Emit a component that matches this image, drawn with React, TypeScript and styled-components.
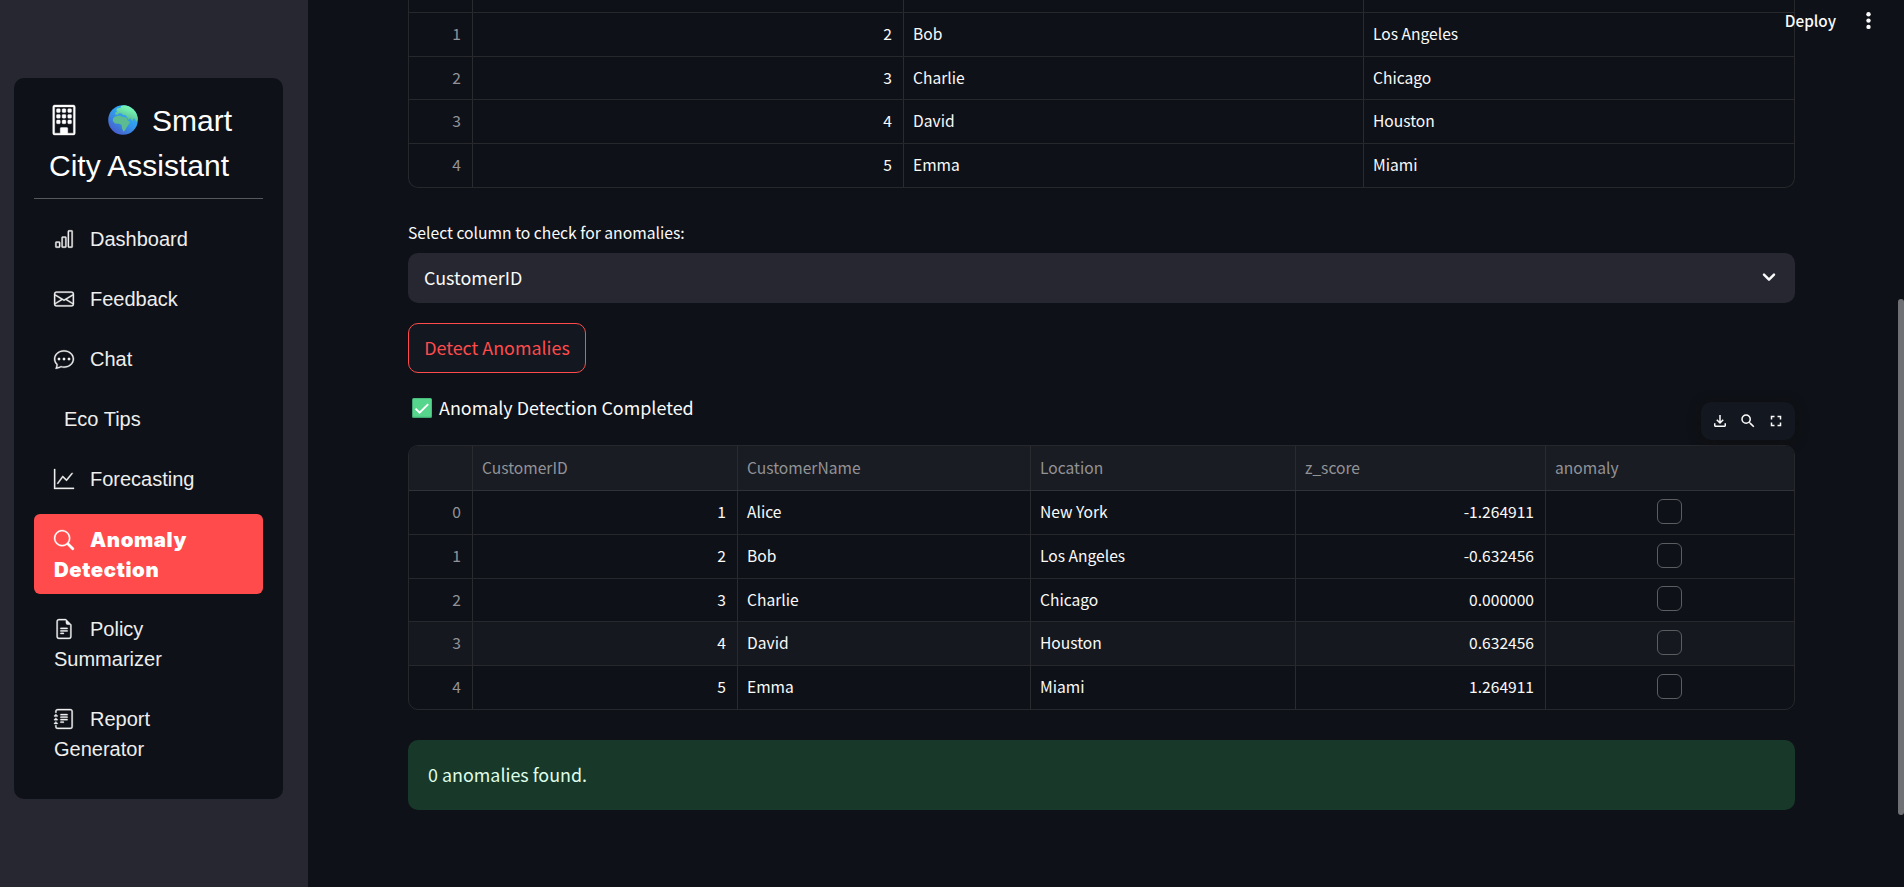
import React from "react";
import styled, { createGlobalStyle, css } from "styled-components";
import {
  BsBarChart,
  BsBuilding,
  BsChatDots,
  BsEnvelope,
  BsFileEarmarkText,
  BsGraphUp,
  BsJournalText,
  BsSearch,
} from "react-icons/bs";
import { MdFullscreen, MdOutlineFileDownload, MdSearch } from "react-icons/md";
import type { IconType } from "react-icons";

const GlobalStyle = createGlobalStyle`
  *, *::before, *::after { box-sizing: border-box; }
  html, body { margin: 0; padding: 0; background: #0e1117; }
  body {
    overflow: hidden;
    color: #fafafa;
    font-family: "Noto Sans CJK SC", "Noto Sans", sans-serif;
  }
`;

const Page = styled.div`
  position: relative;
  display: flex;
  width: 100%;
  height: 887px;
  overflow: hidden;
  background: #0e1117;
`;

/* ---------- sidebar ---------- */

const Sidebar = styled.aside`
  flex: 0 0 308px;
  height: 100%;
  padding: 78px 25px 0 14px;
  background: #262730;
`;

const MenuPanel = styled.nav`
  height: 721px;
  padding: 20px;
  border-radius: 10px;
  background: #0e1117;
  font-family: "Liberation Sans", Arial, sans-serif;
`;

const MenuTitle = styled.h1`
  margin: 0 0 15px;
  padding: 0 0 10px 15px;
  border-bottom: 1px solid #56585c;
  font-size: 30px;
  font-weight: 400;
  line-height: 45px;
  color: #fff;
`;

const TitleLine = styled.span`
  display: flex;
  align-items: center;
  height: 45px;
  white-space: nowrap;

  > svg {
    margin-bottom: 1px;
  }
  > svg:first-child {
    margin-right: 29px;
    stroke: currentColor;
    stroke-width: 0.2px;
    overflow: visible;
  }
  > svg + svg {
    margin-right: 14px;
  }
`;

const MenuList = styled.ul`
  display: flex;
  flex-direction: column;
  gap: 10px;
  margin: 0;
  padding: 0;
  list-style: none;
`;

const MenuItem = styled.li<{ $active?: boolean }>`
  padding: 10px 20px;
  border-radius: 6px;
  font-size: 20px;
  line-height: 30px;
  color: #eee;
  ${(p) =>
    p.$active &&
    css`
      padding-top: 11px;
      padding-bottom: 9px;
      background: #ff4b4b;
      color: #fff;
      font-family: Inter, "Liberation Sans", sans-serif;
      font-size: 20.4px;
      font-weight: 900;
      letter-spacing: 0.6px;
    `}
`;

const MenuLine = styled.span<{ $indent?: boolean }>`
  display: flex;
  align-items: center;
  height: 30px;
  padding-left: ${(p) => (p.$indent ? 10 : 0)}px;
  white-space: nowrap;

  > svg {
    flex: none;
    margin-right: 16px;
    stroke: currentColor;
    stroke-width: 0.25px;
    overflow: visible;
  }
`;

/* ---------- main column ---------- */

const Main = styled.main`
  flex: 1;
  min-width: 0;
  padding: 0 109px 0 100px;
`;

const Grid = styled.div<{ $cols: string; $scrolled?: boolean }>`
  display: flex;
  flex-direction: column;
  width: 1387px;
  border: 1px solid #26282c;
  border-radius: 10px;
  overflow: hidden;
  --cols: ${(p) => p.$cols};
  ${(p) =>
    p.$scrolled &&
    css`
      border-top: 0;
      border-radius: 0 0 10px 10px;
    `}
`;

const GridRow = styled.div<{ $head?: boolean; $hover?: boolean; $h?: number }>`
  display: grid;
  grid-template-columns: var(--cols);
  height: ${(p) => p.$h ?? 44}px;
  border-bottom: 1px solid ${(p) => (p.$head ? "#303238" : "#26282c")};
  background: ${(p) => (p.$head ? "#1a1c23" : p.$hover ? "#15181e" : "transparent")};

  &:last-child {
    border-bottom: 0;
  }
`;

const Cell = styled.div<{ $align?: "right" | "center"; $muted?: boolean }>`
  display: flex;
  align-items: center;
  justify-content: ${(p) =>
    p.$align === "right" ? "flex-end" : p.$align === "center" ? "center" : "flex-start"};
  padding: 0 11px 3px 9px;
  border-right: 1px solid #292b2f;
  font-size: 15.6px;
  line-height: 24px;
  color: ${(p) => (p.$muted ? "#929397" : "#fafafa")};
  white-space: nowrap;

  &:last-child {
    border-right: 0;
  }
`;

const CheckBox = styled.span`
  width: 25px;
  height: 25px;
  border: 1.5px solid #5b5d61;
  border-radius: 6px;
`;

const FieldLabel = styled.label`
  display: block;
  height: 26px;
  margin: 32px 0 7px;
  font-size: 15.7px;
  line-height: 26px;
`;

const Select = styled.div`
  display: flex;
  align-items: center;
  justify-content: space-between;
  width: 1387px;
  height: 50px;
  padding: 0 17px 2px 16px;
  border-radius: 10px;
  background: #262730;
  font-size: 17.9px;
  line-height: 30px;
`;

const Button = styled.button`
  display: block;
  width: 178px;
  height: 50px;
  margin: 20px 0 0;
  padding: 0 0 3px;
  border: 1px solid #ff4b4b;
  border-radius: 10px;
  background: #131720;
  color: #ff4b4b;
  font: 400 17.9px/30px "Noto Sans CJK SC", sans-serif;
`;

const StatusRow = styled.div`
  display: flex;
  justify-content: space-between;
  width: 1387px;
  height: 72px;
`;

const StatusText = styled.p`
  display: flex;
  align-items: center;
  gap: 7px;
  height: 30px;
  margin: 19px 0 0 4px;
  font-size: 17.9px;
  line-height: 30px;

  > svg {
    margin-top: 2px;
  }
`;

const Toolbar = styled.div`
  display: flex;
  align-items: center;
  justify-content: space-between;
  width: 94px;
  height: 38px;
  margin-top: 29px;
  padding: 0 10px;
  border-radius: 10px;
  background: #131720;
  box-shadow: 0 2px 12px rgba(16, 16, 16, 0.9);
`;

const Alert = styled.div`
  display: flex;
  align-items: center;
  width: 1387px;
  height: 70px;
  margin-top: 30px;
  padding: 0 20px 3px;
  border-radius: 10px;
  background: #183929;
  color: #dffde9;
  font-size: 17.9px;
  line-height: 30px;
`;

/* ---------- overlays ---------- */

const AppHeader = styled.header`
  position: absolute;
  top: 0;
  right: 0;
  display: flex;
  align-items: center;
  gap: 23px;
  height: 40px;
  padding-right: 26px;
  font-size: 15.3px;
  font-weight: 500;
  line-height: 26px;
`;

const ScrollThumb = styled.div`
  position: absolute;
  top: 299px;
  right: 0;
  width: 6px;
  height: 516px;
  border-radius: 3px;
  background: #6f7074;
`;

/* ---------- drawings ---------- */

const Globe = () => (
  <svg width="30" height="30" viewBox="0 0 30 30">
    <defs>
      <linearGradient id="sea" x1="0.8" y1="0.15" x2="0.25" y2="0.9">
        <stop offset="0" stopColor="#2fb4f8" />
        <stop offset="0.5" stopColor="#3396ea" />
        <stop offset="1" stopColor="#4663cf" />
      </linearGradient>
      <linearGradient id="land" x1="0.8" y1="0" x2="0.3" y2="1">
        <stop offset="0" stopColor="#7dfcb4" />
        <stop offset="0.3" stopColor="#73efb0" />
        <stop offset="1" stopColor="#4fa38c" />
      </linearGradient>
      <clipPath id="ball">
        <circle cx="15" cy="15" r="14.8" />
      </clipPath>
    </defs>
    <circle cx="15" cy="15" r="14.8" fill="url(#sea)" />
    <g clipPath="url(#ball)">
      <path
        fill="url(#land)"
        d="M7 9.500 7.500 7.200 9.500 6.500 8 5.200 9.500 3.200 12.500 3 13 1 16 0H24L30 7V14.500L28.500 17 27 14 25.500 13.600 24.500 16.200 23 14 21.300 13.600 20.800 15.200 19 12 17.800 10.200 15 10 13.600 8.600 11 8.200 9.500 10Z"
      />
      <path
        fill="#5cbb91"
        d="M7 11.500 12 10.400 14 11.800 18.500 12.500 19.800 15.500 22.300 17 20.500 19.800 18.800 22 17 25.500 15.500 26.800 14 23.500 13.600 20 11 18.800 7 18.600 4.800 16 5 13.500Z"
      />
    </g>
  </svg>
);

const CheckEmoji = () => (
  <svg width="20" height="20" viewBox="0 0 20 20">
    <rect width="20" height="20" rx="1.5" fill="#3fa873" />
    <rect x="1" y="0.6" width="18.400" height="18.200" rx="1" fill="#55d68c" />
    <path d="m3.500 10.600 4.100 4.100 8.600-8.600" fill="none" stroke="#fff" strokeWidth="1.900" />
  </svg>
);

const Chevron = () => (
  <svg width="18" height="18" viewBox="0 0 18 18">
    <path
      d="m4 6.700 5 5 5-5"
      fill="none"
      stroke="#fafafa"
      strokeWidth="2.500"
      strokeLinecap="round"
      strokeLinejoin="round"
    />
  </svg>
);

const Dots = () => (
  <svg width="19" height="20" viewBox="0 0 19 20">
    <g fill="#fafafa">
      <circle cx="9.500" cy="4.300" r="2.200" />
      <circle cx="9.500" cy="10.600" r="2.200" />
      <circle cx="9.500" cy="16.900" r="2.200" />
    </g>
  </svg>
);

/* ---------- data ---------- */

const people = [
  { id: 1, name: "Alice", city: "New York", z: "-1.264911" },
  { id: 2, name: "Bob", city: "Los Angeles", z: "-0.632456" },
  { id: 3, name: "Charlie", city: "Chicago", z: "0.000000" },
  { id: 4, name: "David", city: "Houston", z: "0.632456" },
  { id: 5, name: "Emma", city: "Miami", z: "1.264911" },
];

const rowHeights = [44, 44, 43, 44, 43];

const menu: { lines: string[]; icon?: IconType; active?: boolean }[] = [
  { lines: ["Dashboard"], icon: BsBarChart },
  { lines: ["Feedback"], icon: BsEnvelope },
  { lines: ["Chat"], icon: BsChatDots },
  { lines: ["Eco Tips"] },
  { lines: ["Forecasting"], icon: BsGraphUp },
  { lines: ["Anomaly", "Detection"], icon: BsSearch, active: true },
  { lines: ["Policy", "Summarizer"], icon: BsFileEarmarkText },
  { lines: ["Report", "Generator"], icon: BsJournalText },
];

export default function App() {
  return (
    <Page>
      <GlobalStyle />
      <Sidebar>
        <MenuPanel>
          <MenuTitle>
            <TitleLine>
              <BsBuilding size={30} />
              <Globe />
              Smart
            </TitleLine>
            <TitleLine>City Assistant</TitleLine>
          </MenuTitle>
          <MenuList>
            {menu.map(({ lines, icon: Icon, active }) => (
              <MenuItem key={lines[0]} $active={active}>
                {lines.map((line, i) => (
                  <MenuLine key={line} $indent={!Icon}>
                    {i === 0 && Icon && <Icon size={20} />}
                    {line}
                  </MenuLine>
                ))}
              </MenuItem>
            ))}
          </MenuList>
        </MenuPanel>
      </Sidebar>

      <Main>
        <Grid $cols="64px 431px 460px 1fr" $scrolled>
          <GridRow $h={13}>
            <Cell />
            <Cell />
            <Cell />
            <Cell />
          </GridRow>
          {people.slice(1).map((p, i) => (
            <GridRow key={p.id} $h={rowHeights[i + 1]}>
              <Cell $align="right" $muted>{i + 1}</Cell>
              <Cell $align="right">{p.id}</Cell>
              <Cell>{p.name}</Cell>
              <Cell>{p.city}</Cell>
            </GridRow>
          ))}
        </Grid>

        <FieldLabel>Select column to check for anomalies:</FieldLabel>
        <Select>
          CustomerID
          <Chevron />
        </Select>
        <Button>Detect Anomalies</Button>

        <StatusRow>
          <StatusText>
            <CheckEmoji />
            Anomaly Detection Completed
          </StatusText>
          <Toolbar>
            <MdOutlineFileDownload size={18} />
            <MdSearch size={18} />
            <MdFullscreen size={18} />
          </Toolbar>
        </StatusRow>

        <Grid $cols="64px 265px 293px 265px 250px 1fr">
          <GridRow $head $h={45}>
            <Cell />
            <Cell $muted>CustomerID</Cell>
            <Cell $muted>CustomerName</Cell>
            <Cell $muted>Location</Cell>
            <Cell $muted>z_score</Cell>
            <Cell $muted>anomaly</Cell>
          </GridRow>
          {people.map((p, i) => (
            <GridRow key={p.id} $hover={i === 3} $h={rowHeights[i]}>
              <Cell $align="right" $muted>{i}</Cell>
              <Cell $align="right">{p.id}</Cell>
              <Cell>{p.name}</Cell>
              <Cell>{p.city}</Cell>
              <Cell $align="right">{p.z}</Cell>
              <Cell $align="center">
                <CheckBox />
              </Cell>
            </GridRow>
          ))}
        </Grid>

        <Alert>0 anomalies found.</Alert>
      </Main>

      <AppHeader>
        Deploy
        <Dots />
      </AppHeader>
      <ScrollThumb />
    </Page>
  );
}
